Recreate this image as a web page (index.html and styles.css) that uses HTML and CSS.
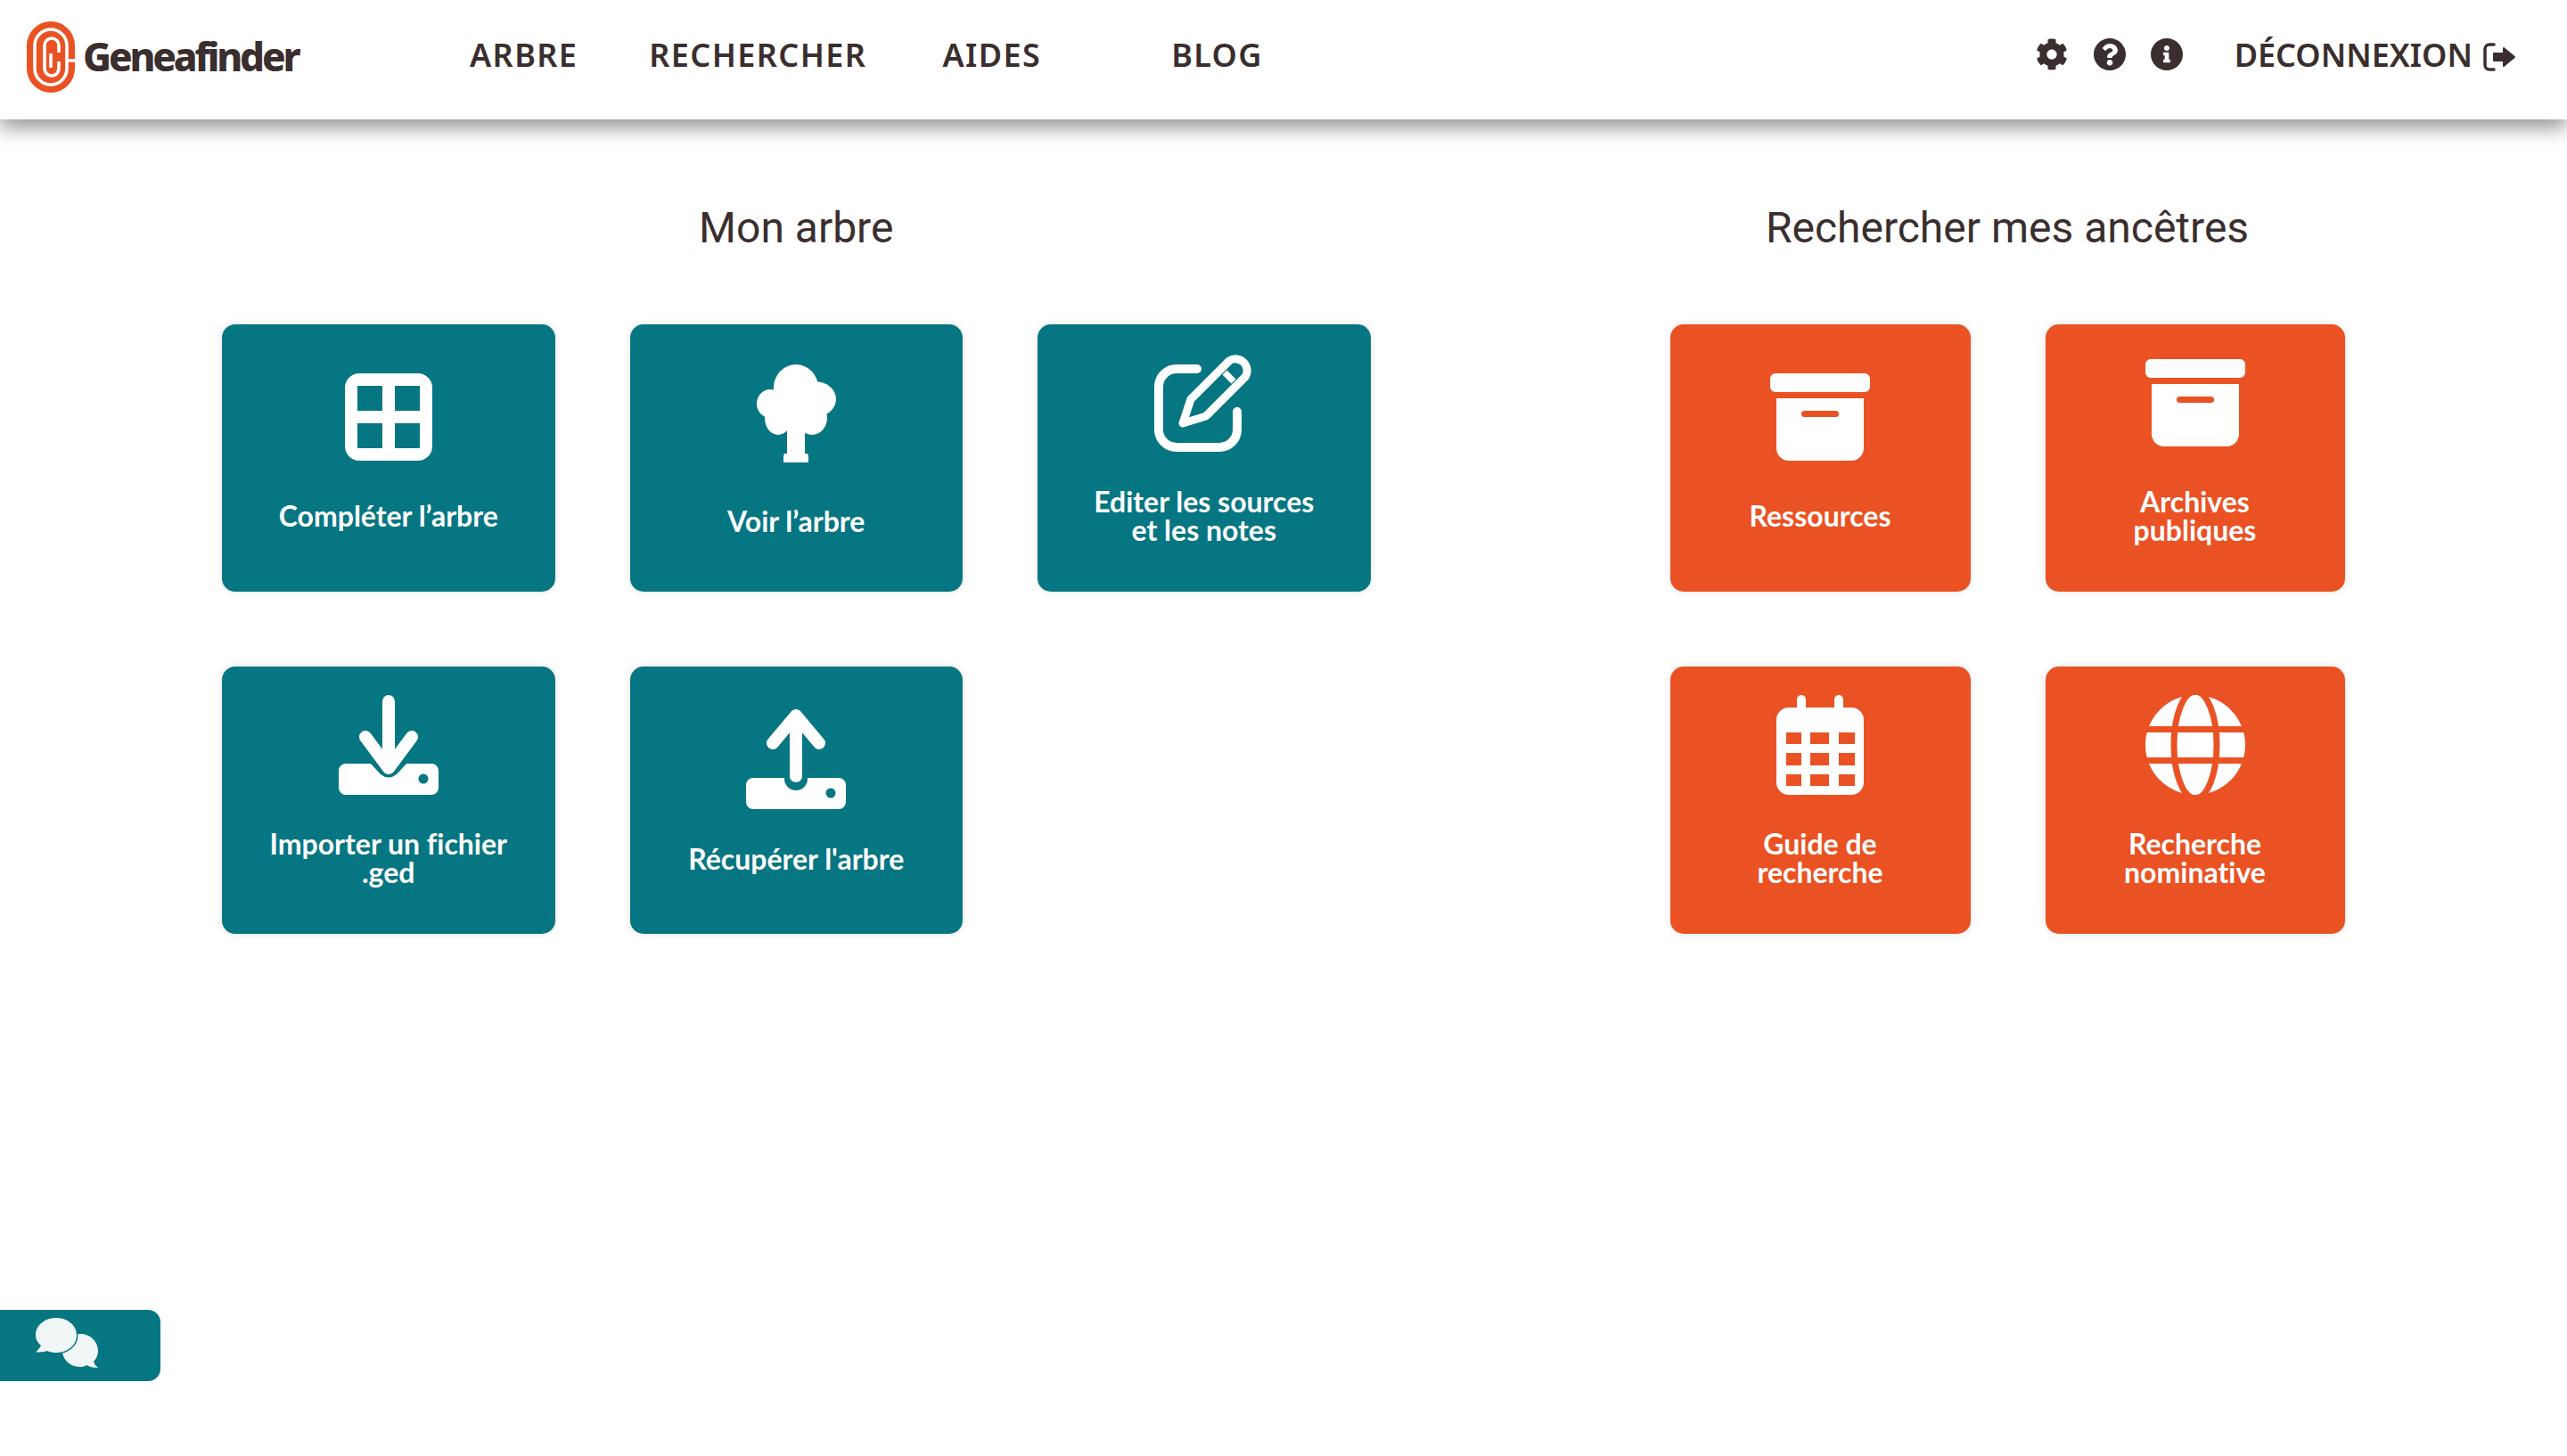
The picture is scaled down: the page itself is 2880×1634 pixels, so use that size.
FILE: index.html
```html
<!DOCTYPE html>
<html lang="fr">
<head>
    <meta charset="UTF-8">
    <meta name="viewport" content="width=device-width, initial-scale=1.0">
    <title>Geneafinder</title>
    <link rel="stylesheet" href="styles.css">
</head>
<body>
    <header class="topbar">
        <a class="logo" href="#">
            <svg class="logo-mark" viewBox="0 0 54 80" width="54" height="80">
                <rect width="54" height="80" rx="27" fill="#ea5223"/>
                <g fill="none" stroke="#fff" stroke-width="3.6">
                    <path d="M45 44V27A18 18 0 0 0 9 27V53A18 18 0 0 0 45 53V44H54"/>
                    <path d="M36 35V27A8 8 0 0 0 20 27V53A8 8 0 0 0 36 53V45"/>
                    <path d="M27 36V52"/>
                </g>
            </svg>
            <span class="logo-name">Geneafinder</span>
        </a>
        <nav class="menu">
            <a href="#">ARBRE</a>
            <a href="#">RECHERCHER</a>
            <a class="menu-aides" href="#">AIDES</a>
            <a class="menu-blog" href="#">BLOG</a>
        </nav>
        <div class="tools">
            <svg class="tool-gear" viewBox="0 0 512 512"><path d="M487.4 315.7l-42.6-24.6c4.3-23.2 4.3-47 0-70.2l42.6-24.6c4.9-2.8 7.1-8.6 5.5-14-11.1-35.6-30-67.8-54.7-94.6-3.8-4.1-10-5.1-14.8-2.3L380.8 110c-17.9-15.4-38.5-27.3-60.8-35.1V25.8c0-5.6-3.9-10.5-9.4-11.7-36.7-8.2-74.3-7.8-109.2 0-5.5 1.2-9.4 6.1-9.4 11.7V75c-22.2 7.9-42.8 19.8-60.8 35.1L88.7 85.5c-4.9-2.8-11-1.9-14.8 2.3-24.7 26.7-43.6 58.9-54.7 94.6-1.7 5.4.6 11.2 5.5 14L67.3 221c-4.3 23.2-4.3 47 0 70.2l-42.6 24.6c-4.9 2.8-7.1 8.6-5.5 14 11.1 35.6 30 67.8 54.7 94.6 3.8 4.1 10 5.1 14.8 2.3l42.6-24.6c17.9 15.4 38.5 27.3 60.8 35.1v49.2c0 5.6 3.9 10.5 9.4 11.7 36.7 8.2 74.3 7.8 109.2 0 5.5-1.2 9.4-6.1 9.4-11.7v-49.2c22.2-7.9 42.8-19.8 60.8-35.1l42.6 24.6c4.9 2.8 11 1.9 14.8-2.3 24.7-26.7 43.6-58.9 54.7-94.6 1.5-5.5-.7-11.3-5.6-14.1zM256 336c-44.1 0-80-35.9-80-80s35.9-80 80-80 80 35.9 80 80-35.9 80-80 80z"/></svg>
            <svg class="tool-round" viewBox="8 8 496 496"><path d="M504 256c0 136.997-111.043 248-248 248S8 392.997 8 256C8 119.083 119.043 8 256 8s248 111.083 248 248zM262.655 90c-54.497 0-89.255 22.957-116.549 63.758-3.536 5.286-2.353 12.415 2.715 16.258l34.699 26.31c5.205 3.947 12.621 3.008 16.665-2.122 17.864-22.658 30.113-35.797 57.303-35.797 20.429 0 45.698 13.148 45.698 32.958 0 14.976-12.363 22.667-32.534 33.976C247.128 238.528 216 254.941 216 296v4c0 6.627 5.373 12 12 12h56c6.627 0 12-5.373 12-12v-1.333c0-28.462 83.186-29.647 83.186-106.667 0-58.002-60.165-102-116.531-102zM256 338c-25.365 0-46 20.635-46 46 0 25.364 20.635 46 46 46s46-20.636 46-46c0-25.365-20.635-46-46-46z"/></svg>
            <svg class="tool-round" viewBox="8 8 496 496"><path d="M256 8C119.043 8 8 119.083 8 256c0 136.997 111.043 248 248 248s248-111.003 248-248C504 119.083 392.957 8 256 8zm0 110c23.196 0 42 18.804 42 42s-18.804 42-42 42-42-18.804-42-42 18.804-42 42-42zm56 254c0 6.627-5.373 12-12 12h-88c-6.627 0-12-5.373-12-12v-24c0-6.627 5.373-12 12-12h12v-64h-12c-6.627 0-12-5.373-12-12v-24c0-6.627 5.373-12 12-12h64c6.627 0 12 5.373 12 12v100h12c6.627 0 12 5.373 12 12v24z"/></svg>
            <a class="logout" href="#">DÉCONNEXION
                <svg class="logout-icon" viewBox="0 0 36 32">
                    <path fill="none" stroke="#3a2e2e" stroke-width="3.5" stroke-linecap="round" d="M12 2H7A5 5 0 0 0 2 7V25A5 5 0 0 0 7 30H12"/>
                    <path stroke="#3a2e2e" stroke-width="2" stroke-linejoin="round" d="M12 12H23V6L35 16L23 26V20H12Z"/>
                </svg>
            </a>
        </div>
    </header>

    <main class="board">
        <section class="group group-tree">
            <h2>Mon arbre</h2>
            <div class="tiles">
                <a class="tile" href="#">
                    <svg class="tile-icon lower" viewBox="0 0 98 98" width="98" height="98"><path fill-rule="evenodd" d="M16 0H82A16 16 0 0 1 98 16V82A16 16 0 0 1 82 98H16A16 16 0 0 1 0 82V16A16 16 0 0 1 16 0ZM14 14V42H42V14ZM56 14V42H84V14ZM14 56V84H42V56ZM56 56V84H84V56Z"/></svg>
                    <span class="tile-label">Compléter l’arbre</span>
                </a>
                <a class="tile" href="#">
                    <svg class="tile-icon mid" viewBox="0 0 89 110" width="89" height="110">
                        <ellipse cx="44" cy="26" rx="25" ry="26"/>
                        <ellipse cx="15" cy="44" rx="15" ry="16"/>
                        <ellipse cx="65" cy="39" rx="24" ry="20"/>
                        <ellipse cx="24" cy="60" rx="15" ry="19"/>
                        <ellipse cx="62" cy="60" rx="17" ry="19"/>
                        <rect x="24" y="28" width="40" height="44"/>
                        <path d="M34 70H54V100H56Q58 100 58 104V110H30V104Q30 100 32 100H34Z"/>
                    </svg>
                    <span class="tile-label tile-label-low">Voir l’arbre</span>
                </a>
                <a class="tile" href="#">
                    <svg class="tile-icon high" viewBox="0 0 111 111" width="111" height="111">
                        <g fill="none" stroke="#fff" stroke-width="10" stroke-linecap="round" stroke-linejoin="round">
                            <path d="M48 18H25A20 20 0 0 0 5 38V86A20 20 0 0 0 25 106H73A20 20 0 0 0 93 86V66"/>
                            <path stroke-width="9" d="M32 79L41 52L84 9A13 13 0 0 1 102 27L59 70Q58 71 55 72Z"/>
                            <path stroke-width="7" stroke-linecap="butt" d="M79 22L89 32"/>
                        </g>
                    </svg>
                    <span class="tile-label">Editer les sources<br>et les notes</span>
                </a>
                <a class="tile" href="#">
                    <svg class="tile-icon high" viewBox="0 0 112 112" width="112" height="112">
                        <path fill="none" stroke="#fff" stroke-width="14" stroke-linecap="round" stroke-linejoin="round" d="M56 7V77M30 47L56 82L82 47"/>
                        <path fill-rule="evenodd" d="M8 77H36L47 89Q56 96 65 89L76 77H104A8 8 0 0 1 112 85V104A8 8 0 0 1 104 112H8A8 8 0 0 1 0 104V85A8 8 0 0 1 8 77ZM95 88.500A5.500 5.500 0 1 0 95 99.500A5.500 5.500 0 1 0 95 88.500Z"/>
                    </svg>
                    <span class="tile-label">Importer un fichier<br>.ged</span>
                </a>
                <a class="tile" href="#">
                    <svg class="tile-icon low" viewBox="0 0 112 112" width="112" height="112">
                        <path fill="none" stroke="#fff" stroke-width="14" stroke-linecap="round" stroke-linejoin="round" d="M56 75V7M30 38L56 7L82 38"/>
                        <path fill-rule="evenodd" d="M8 77H43V78A13 13 0 0 0 69 78V77H104A8 8 0 0 1 112 85V104A8 8 0 0 1 104 112H8A8 8 0 0 1 0 104V85A8 8 0 0 1 8 77ZM95 88.500A5.500 5.500 0 1 0 95 99.500A5.500 5.500 0 1 0 95 88.500Z"/>
                    </svg>
                    <span class="tile-label">Récupérer l'arbre</span>
                </a>
            </div>
        </section>

        <section class="group group-search">
            <h2>Rechercher mes ancêtres</h2>
            <div class="tiles">
                <a class="tile" href="#">
                    <svg class="tile-icon lower" viewBox="0 0 112 98" width="112" height="98">
                        <rect width="112" height="21" rx="6"/>
                        <path fill-rule="evenodd" d="M7 28H105V84A14 14 0 0 1 91 98H21A14 14 0 0 1 7 84ZM38.500 42A3.500 3.500 0 0 0 38.500 49H73.500A3.500 3.500 0 0 0 73.500 42Z"/>
                    </svg>
                    <span class="tile-label">Ressources</span>
                </a>
                <a class="tile" href="#">
                    <svg class="tile-icon top" viewBox="0 0 112 98" width="112" height="98">
                        <rect width="112" height="21" rx="6"/>
                        <path fill-rule="evenodd" d="M7 28H105V84A14 14 0 0 1 91 98H21A14 14 0 0 1 7 84ZM38.500 42A3.500 3.500 0 0 0 38.500 49H73.500A3.500 3.500 0 0 0 73.500 42Z"/>
                    </svg>
                    <span class="tile-label">Archives<br>publiques</span>
                </a>
                <a class="tile" href="#">
                    <svg class="tile-icon high" viewBox="0 0 98 112" width="98" height="112">
                        <rect x="23" width="10" height="24" rx="5"/>
                        <rect x="65" width="10" height="24" rx="5"/>
                        <path fill-rule="evenodd" d="M14 14H84A14 14 0 0 1 98 28V98A14 14 0 0 1 84 112H14A14 14 0 0 1 0 98V28A14 14 0 0 1 14 14ZM11 42V55H28V42ZM38 42V55H59V42ZM70 42V55H88V42ZM11 65V79H28V65ZM38 65V79H59V65ZM70 65V79H88V65ZM11 89V102H28V89ZM38 89V102H59V89ZM70 89V102H88V89Z"/>
                    </svg>
                    <span class="tile-label">Guide de<br>recherche</span>
                </a>
                <a class="tile" href="#">
                    <svg class="tile-icon high" viewBox="0 0 112 112" width="112" height="112">
                        <circle cx="56" cy="56" r="56"/>
                        <g fill="none" stroke="#ea5223" stroke-width="7">
                            <ellipse cx="56" cy="56" rx="24" ry="60"/>
                            <path d="M0 38.500H112M0 73.500H112"/>
                        </g>
                    </svg>
                    <span class="tile-label">Recherche<br>nominative</span>
                </a>
            </div>
        </section>
    </main>

    <button class="chat" type="button" aria-label="Discussion">
        <svg viewBox="0 0 70 56" width="70" height="56">
            <path d="M50 18C61 18 70 26 70 37C70 42 68 46 65 49Q66 53 70 56Q62 56 57 53C55 54.500 53 55 50 55C39 55 30 47 30 37C30 26 39 18 50 18Z"/>
            <path class="chat-front" d="M23 0C36 0 46 8.500 46 19.500C46 30.500 36 39 23 39C19 39 16 38.500 13 37Q7 39 0 38.500Q4 35 6 31C2 28 0 24 0 19.500C0 8.500 10 0 23 0Z"/>
        </svg>
    </button>
</body>
</html>
```

FILE: styles.css
```css
* {
    box-sizing: border-box;
}

body {
    margin: 0;
    height: 1634px;
    background-color: #fff;
    color: #3a2e2e;
    font-family: "Noto Sans", "Open Sans", sans-serif;
}

a {
    color: inherit;
    text-decoration: none;
}

.topbar {
    display: flex;
    align-items: center;
    height: 134px;
    padding: 0 58px 12px 30px;
    background-color: #fff;
    box-shadow: 0 10px 20px rgba(0, 0, 0, 0.4);
}

.logo {
    display: flex;
    align-items: center;
    gap: 9px;
    width: 497px;
    margin-top: 6px;
}

.logo-mark {
    display: block;
}

.logo-name {
    margin-top: -2px;
    font-size: 44px;
    font-weight: 800;
    letter-spacing: -3.2px;
}

.menu {
    display: flex;
    gap: 80px;
    font-size: 36px;
    font-weight: 600;
    letter-spacing: 1.4px;
}

.menu-aides {
    margin-left: 5px;
}

.menu-blog {
    margin-left: 66px;
}

.tools {
    display: flex;
    align-items: center;
    margin-left: auto;
    font-size: 36px;
    font-weight: 600;
}

.tools svg {
    display: block;
    fill: #3a2e2e;
}

.tool-gear {
    width: 36px;
    height: 36px;
    margin-right: 29px;
}

.tool-round {
    width: 36px;
    height: 36px;
    margin-right: 28px;
}

.tool-round + .logout {
    margin-left: 30px;
}

.logout {
    display: flex;
    align-items: center;
    gap: 12px;
}

.logout-icon {
    width: 36px;
    height: 32px;
    margin-top: 5px;
}

.board {
    display: flex;
    gap: 336px;
    padding: 0 0 0 249px;
}

.group h2 {
    height: 230px;
    margin: 0;
    padding-top: 95px;
    font-family: "Roboto", "Noto Sans", sans-serif;
    font-size: 48px;
    font-weight: 400;
    line-height: 54px;
    text-align: center;
}

.tiles {
    display: grid;
    gap: 84px;
}

.group-tree .tiles {
    grid-template-columns: repeat(3, 373.5px);
}

.group-search .tiles {
    grid-template-columns: 337px 336px;
}

.tile {
    display: flex;
    flex-direction: column;
    align-items: center;
    height: 300px;
    border-radius: 15px;
    color: #fff;
    box-shadow: 0 0 8px rgba(0, 0, 0, 0.12);
}

.group-tree .tile {
    background-color: #067682;
}

.group-search .tile {
    background-color: #ea5223;
}

.tile-icon {
    display: block;
    flex: none;
    margin-bottom: auto;
    fill: #fff;
}

/* icons do not share a height in the source, each sits at its own offset */
.tile-icon.high {
    margin-top: 32px;
}

.tile-icon.top {
    margin-top: 39px;
}

.tile-icon.mid {
    margin-top: 45px;
}

.tile-icon.low {
    margin-top: 48px;
}

.tile-icon.lower {
    margin-top: 55px;
}

.tile-label {
    display: flex;
    align-items: center;
    height: 112px;
    margin-bottom: 29px;
    font-family: "Lato", "Open Sans", sans-serif;
    font-size: 32px;
    font-weight: 700;
    font-variant-ligatures: none;
    line-height: 32px;
    text-align: center;
}

.tile-label-low {
    padding-top: 12px;
}

.chat {
    position: absolute;
    left: 0;
    top: 1470px;
    display: flex;
    align-items: flex-start;
    width: 180px;
    height: 80px;
    padding: 9px 0 0 40px;
    border: none;
    border-radius: 0 14px 14px 0;
    background-color: #067682;
}

.chat svg {
    display: block;
    fill: #f0f6f6;
}

.chat-front {
    stroke: #067682;
    stroke-width: 3;
    paint-order: stroke;
}
```
